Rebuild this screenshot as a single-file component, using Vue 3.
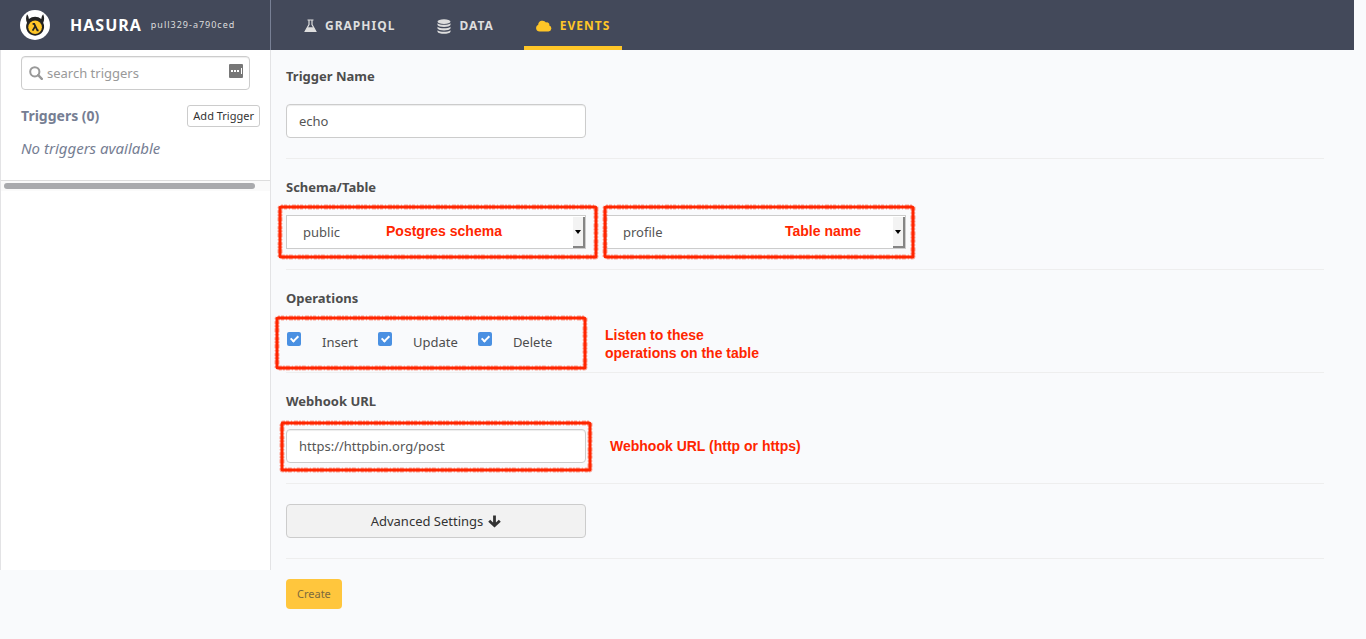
<script setup>
import { ref } from 'vue'

const search = ref('')
const triggerName = ref('echo')
const schema = ref('public')
const table = ref('profile')
const webhook = ref('https://httpbin.org/post')
const operations = ref([
  { id: 'insert', label: 'Insert', on: true },
  { id: 'update', label: 'Update', on: true },
  { id: 'delete', label: 'Delete', on: true },
])
</script>

<template>
  <div class="page">
    <header class="topbar">
      <div class="brand">
        <svg class="logo" viewBox="0 0 30 30" aria-hidden="true">
          <circle cx="15" cy="15" r="15" fill="#fff" />
          <path d="M7 4.200C5.800 7 5.700 10 7 12.800a9 9 0 1 0 16.200 0C24.500 10 24.400 7 23.200 4.200C22 5.200 21.600 7 21.300 9a10 10 0 0 0-12.400 0C8.600 7 8.200 5.200 7 4.200z" fill="#222" />
          <circle cx="15.100" cy="17.300" r="6.800" fill="#ffc627" />
          <path d="M12.600 13.800h1.600l3.200 6.600h1.200M15 16.600l-2.400 4" fill="none" stroke="#222" stroke-width="1.800" />
        </svg>
        <a href="#" class="name">HASURA</a>
        <span class="version">pull329-a790ced</span>
      </div>
      <nav class="tabs">
        <a href="#" class="tab">
          <svg width="13" height="14" viewBox="0 0 13 14" aria-hidden="true">
            <path d="M3.500 1h6M5 1v4.500L1.200 12.300h10.600L8 5.500V1" fill="none" stroke="currentColor" stroke-width="1.200" />
            <path d="M3.500 8.300h6l2.700 4.200H.8z" fill="currentColor" />
          </svg>
          GRAPHIQL
        </a>
        <a href="#" class="tab">
          <svg width="14" height="15" viewBox="0 0 14 15" fill="currentColor" aria-hidden="true">
            <ellipse cx="7" cy="2.600" rx="6.500" ry="2.400" />
            <path d="M.5 4.300c2.500 2 10.500 2 13 0v1.800c-1 2.500-12 2.500-13 0zM.5 7.800c2.500 2 10.500 2 13 0v1.800c-1 2.500-12 2.500-13 0zM.5 11.200c2.500 2 10.500 2 13 0v1.500c-1 2.700-12 2.700-13 0z" />
          </svg>
          DATA
        </a>
        <a href="#" class="tab active">
          <svg width="16" height="12" viewBox="0 0 16 12" fill="currentColor" aria-hidden="true">
            <path d="M3.500 11.500A3.500 3.500 0 0 1 2.200 4.800 4.300 4.300 0 0 1 10 2.500a2.500 2.500 0 0 1 3.300 3A3.100 3.100 0 0 1 12.500 11.500z" />
          </svg>
          EVENTS
        </a>
      </nav>
    </header>

    <div class="body">
      <aside class="sidebar">
        <div class="search">
          <svg class="glass" viewBox="0 0 14 14" aria-hidden="true">
            <circle cx="5.800" cy="5.800" r="4.600" fill="none" stroke="#999" stroke-width="2" />
            <path d="M9.200 9.200l3.600 3.600" stroke="#999" stroke-width="2.400" stroke-linecap="round" />
          </svg>
          <input v-model="search" type="text" aria-label="search triggers" placeholder="search triggers" />
          <svg class="keys" viewBox="0 0 14 14" aria-hidden="true">
            <rect width="14" height="14" rx="1" fill="#777" />
            <path d="M2 6h2v2H2zM5 6h2v2H5zM8 6h2v2H8zM12 4h1v6h-1z" fill="#fff" />
          </svg>
        </div>
        <div class="side-head">
          <h2>Triggers (0)</h2>
          <button type="button" class="add">Add Trigger</button>
        </div>
        <p class="empty">No triggers available</p>
        <div class="track"><div class="thumb"></div></div>
      </aside>

      <main class="content">
        <section class="block first">
          <h3><label for="trigger-name">Trigger Name</label></h3>
          <input id="trigger-name" v-model="triggerName" class="field" type="text" />
        </section>

        <section class="block">
          <h3>Schema/Table</h3>
          <div class="row">
            <div class="picker">
              <select v-model="schema" aria-label="Postgres schema">
                <option>public</option>
              </select>
              <span class="drop" aria-hidden="true"></span>
              <svg class="frame schema-frame" aria-hidden="true">
                <rect x="2" y="2" rx="1" />
                <rect class="rough" x="2" y="2" rx="1" />
              </svg>
              <span class="note schema-note">Postgres schema</span>
            </div>
            <div class="picker">
              <select v-model="table" aria-label="Table name">
                <option>profile</option>
              </select>
              <span class="drop" aria-hidden="true"></span>
              <svg class="frame table-frame" aria-hidden="true">
                <rect x="2" y="2" rx="1" />
                <rect class="rough" x="2" y="2" rx="1" />
              </svg>
              <span class="note table-note">Table name</span>
            </div>
          </div>
        </section>

        <section class="block">
          <h3>Operations</h3>
          <div class="ops">
            <label v-for="op in operations" :key="op.id" class="op">
              <input v-model="op.on" type="checkbox" />
              <span>{{ op.label }}</span>
            </label>
            <svg class="frame ops-frame" aria-hidden="true">
              <rect x="2" y="2" rx="1" />
              <rect class="rough" x="2" y="2" rx="1" />
            </svg>
            <p class="note ops-note">Listen to these<br />operations on the table</p>
          </div>
        </section>

        <section class="block">
          <h3><label for="webhook">Webhook URL</label></h3>
          <div class="hook">
            <div class="picker">
              <input id="webhook" v-model="webhook" class="field" type="text" />
              <svg class="frame hook-frame" aria-hidden="true">
                <rect x="2" y="2" rx="1" />
                <rect class="rough" x="2" y="2" rx="1" />
              </svg>
            </div>
            <span class="note">Webhook URL (http or https)</span>
          </div>
        </section>

        <section class="block plain">
          <button type="button" class="advanced">
            Advanced Settings
            <svg width="13" height="13" viewBox="0 0 13 13" aria-hidden="true">
              <path d="M6.500 0.500v10M1.200 5.700l5.300 5 5.300-5" fill="none" stroke="#333" stroke-width="2.800" />
            </svg>
          </button>
        </section>

        <button type="button" class="create">Create</button>
      </main>
    </div>
  </div>
</template>

<style>
body {
  background: #f9fafc;
}
</style>

<style scoped>
* {
  box-sizing: border-box;
}
.page {
  font-family: "Noto Sans", "Open Sans", sans-serif;
  font-size: 13px;
  line-height: 20px;
  color: #4d4d4d;
}
h2, h3, p {
  margin: 0;
}
a {
  text-decoration: none;
}
input, select, button {
  font: inherit;
  color: #555;
}
.topbar {
  display: flex;
  height: 50px;
  margin-right: 12px;
  background: #43495a;
}
.brand {
  display: flex;
  align-items: center;
  flex: 0 0 271px;
  padding-left: 20px;
  border-right: 1px solid #788095;
}
.logo {
  width: 30px;
  height: 30px;
  margin-right: 20px;
}
.name {
  font-size: 16px;
  font-weight: 700;
  letter-spacing: 1px;
  color: #fff;
}
.version {
  margin-left: 9px;
  font-size: 9px;
  letter-spacing: 1px;
  color: #dedede;
}
.tabs {
  display: flex;
  padding-left: 21px;
}
.tab {
  display: flex;
  align-items: center;
  gap: 8px;
  padding: 6px 12px 0;
  margin-right: 18px;
  border-bottom: 4px solid transparent;
  font-size: 12px;
  font-weight: 700;
  letter-spacing: 1px;
  color: #dedede;
}
.tab.active {
  border-color: #ffc627;
  color: #ffc627;
}
.body {
  display: flex;
  align-items: flex-start;
}
.sidebar {
  flex: 0 0 271px;
  min-width: 0;
  height: 520px;
  padding-top: 6px;
  background: #fff;
  border: solid #e3e3e5;
  border-width: 0 1px;
}
.search {
  display: flex;
  align-items: center;
  height: 34px;
  margin: 0 20px;
  padding: 0 6px 0 7px;
  border: 1px solid #ccc;
  border-radius: 4px;
  box-shadow: inset 0 1px 1px rgba(0, 0, 0, 0.075);
}
.search input {
  flex: 1;
  min-width: 0;
  padding: 0 4px;
  border: 0;
  outline: 0;
  background: none;
}
.search input::placeholder {
  color: #999;
}
.glass, .keys {
  flex: none;
  width: 14px;
  height: 14px;
}
.keys {
  margin-bottom: 4px;
}
.side-head {
  display: flex;
  align-items: center;
  justify-content: space-between;
  margin-top: 15px;
  padding: 0 10px 0 20px;
}
h2 {
  font-size: 14px;
  line-height: 20px;
  font-weight: 700;
  color: #767e93;
}
.add {
  height: 22px;
  padding: 0 5px;
  border: 1px solid #ccc;
  border-radius: 3px;
  background: #fff;
  font-size: 11px;
  line-height: 18px;
  color: #333;
}
.empty {
  margin-top: 11px;
  padding-left: 20px;
  font-size: 15px;
  font-style: italic;
  color: #767e93;
}
.track {
  margin-top: 22px;
  padding: 2px 15px 2px 3px;
  border-top: 1px solid #ddd;
  background: #fafafa;
}
.thumb {
  height: 6px;
  border-radius: 3px;
  background: #a9aaad;
}
.content {
  flex: 1;
  padding: 0 42px 30px 15px;
}
.block {
  padding: 18px 0 20px;
  border-bottom: 1px solid #eee;
}
.block.first {
  padding-top: 16px;
}
.block.plain {
  padding-top: 20px;
}
h3 {
  margin-bottom: 18px;
  font-size: 13px;
  line-height: 20px;
  font-weight: 700;
}
.field {
  display: block;
  width: 300px;
  height: 34px;
  padding: 0 12px;
  border: 1px solid #ccc;
  border-radius: 4px;
  background: #fff;
  box-shadow: inset 0 1px 1px rgba(0, 0, 0, 0.075);
}
.row {
  display: flex;
  gap: 20px;
}
.picker {
  position: relative;
  width: 300px;
}
select {
  display: block;
  width: 100%;
  height: 34px;
  padding: 0 16px;
  border: 1px solid #ccc;
  border-radius: 0;
  background: #fff;
  appearance: none;
}
.drop {
  position: absolute;
  top: 2px;
  right: 1px;
  width: 12px;
  height: 31px;
  border: solid #858585;
  border-width: 0 2px 2px 0;
  background: #f3f3f3;
  pointer-events: none;
}
.drop::after {
  content: "";
  position: absolute;
  top: 13px;
  left: 2px;
  border: solid transparent;
  border-width: 4px 3px 0;
  border-top-color: #000;
}
.frame {
  position: absolute;
  overflow: visible;
  pointer-events: none;
}
.frame rect {
  width: calc(100% - 4px);
  height: calc(100% - 4px);
  fill: none;
  stroke: #ff2600;
  stroke-width: 3px;
}
.frame .rough {
  stroke-width: 5px;
  stroke-dasharray: 2 1 3 2 1 2 4 1;
  opacity: 0.4;
}
.schema-frame {
  top: -10px;
  left: -8px;
  width: 320px;
  height: 54px;
}
.table-frame {
  top: -10px;
  left: -3px;
  width: 312px;
  height: 54px;
}
.ops-frame {
  top: -10px;
  left: -11px;
  width: 312px;
  height: 54px;
}
.hook-frame {
  top: -8px;
  left: -6px;
  width: 312px;
  height: 51px;
}
.note {
  font-family: "Liberation Sans", Arial, sans-serif;
  font-size: 14px;
  line-height: 18px;
  font-weight: 700;
  color: #ff2600;
  white-space: nowrap;
}
.schema-note, .table-note, .ops-note {
  position: absolute;
  pointer-events: none;
}
.schema-note {
  top: 7px;
  left: 100px;
}
.table-note {
  top: 7px;
  left: 179px;
}
.ops-note {
  top: 0;
  left: 319px;
}
.ops {
  position: relative;
  display: flex;
  gap: 19px;
  padding-top: 6px;
}
.op {
  display: flex;
  align-items: flex-start;
  gap: 21px;
}
.op input {
  position: relative;
  width: 14px;
  height: 14px;
  margin: 0 0 0 1px;
  border-radius: 2px;
  background: #4a90e2;
  appearance: none;
}
.op input:checked::after {
  content: "";
  position: absolute;
  top: 2px;
  left: 5px;
  width: 3px;
  height: 6px;
  border: solid #fff;
  border-width: 0 2px 2px 0;
  transform: rotate(45deg);
}
.hook {
  display: flex;
  align-items: center;
  gap: 24px;
}
.advanced {
  display: flex;
  align-items: center;
  justify-content: center;
  gap: 5px;
  width: 300px;
  height: 34px;
  border: 1px solid #ccc;
  border-radius: 4px;
  background: #f2f2f2;
  color: #333;
}
.create {
  display: block;
  height: 30px;
  margin-top: 20px;
  padding: 0 11px;
  border: 0;
  border-radius: 4px;
  background: #ffc63d;
  font-size: 11px;
  color: #7d6a3e;
}
</style>
